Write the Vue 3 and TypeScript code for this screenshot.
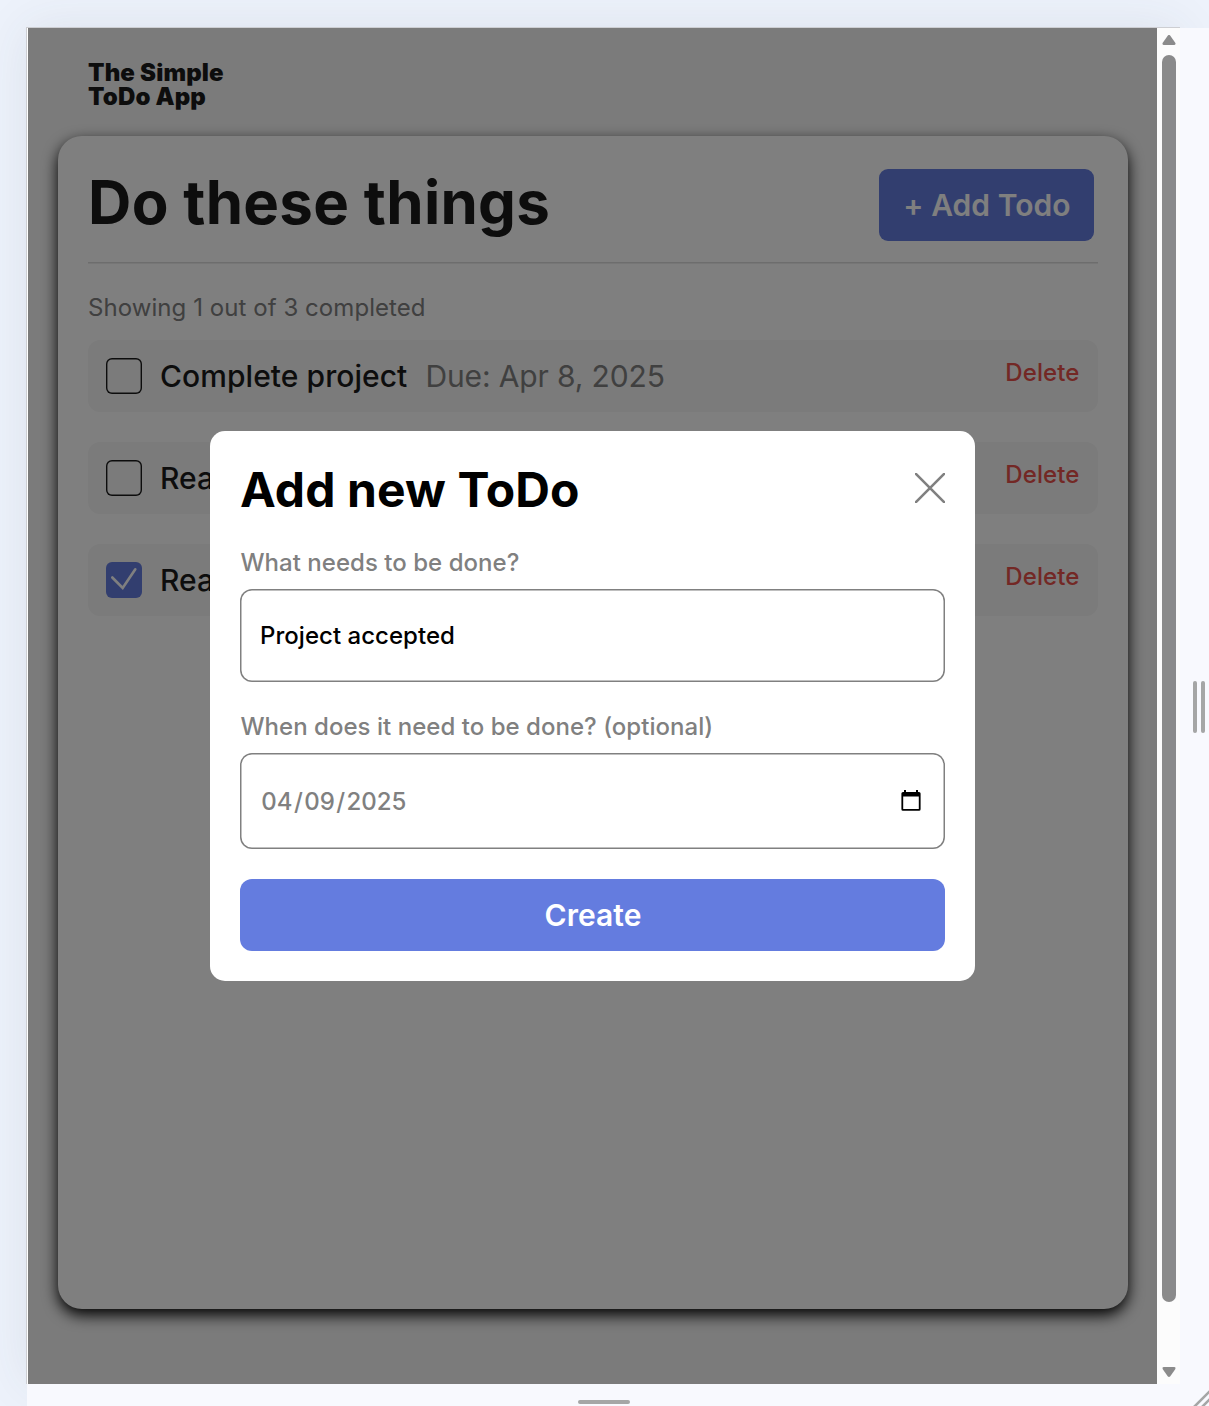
<script setup lang="ts">
import { computed, ref } from 'vue'

interface Todo {
  text: string
  due: string
  done: boolean
}

const todos = ref<Todo[]>([
  { text: 'Complete project', due: 'Apr 8, 2025', done: false },
  { text: 'Read', due: '', done: false },
  { text: 'Read', due: '', done: true },
])
const newTodo = ref('Project accepted')
const newDue = ref('04/09/2025')
const dueParts = computed(() => newDue.value.split(/(\/)/))
</script>

<template>
  <div class="desk">
    <div class="device">
      <div class="viewport">
        <div class="page">
          <header class="brand">The Simple<br />ToDo App</header>
          <main class="card">
            <div class="card-head">
              <h1>Do these things</h1>
              <button class="add" type="button">+ Add Todo</button>
            </div>
            <p class="summary">Showing 1 out of 3 completed</p>
            <ul class="list">
              <li v-for="(todo, i) in todos" :key="i" class="item">
                <span class="box" :class="{ checked: todo.done }">
                  <svg v-if="todo.done" viewBox="0 0 36 36" width="36" height="36">
                    <path d="M6.3 15.5 16.7 26 29.3 7.3" />
                  </svg>
                </span>
                <span class="text">{{ todo.text }}</span>
                <span v-if="todo.due" class="due">Due: {{ todo.due }}</span>
                <a class="delete">Delete</a>
              </li>
            </ul>
          </main>
        </div>
        <div class="overlay">
          <section class="modal">
            <div class="modal-head">
              <h2>Add new ToDo</h2>
              <svg class="close" viewBox="0 0 30 30" width="30" height="30">
                <path d="M0 0 30 30M30 0 0 30" />
              </svg>
            </div>
            <label>What needs to be done?</label>
            <div class="field name">{{ newTodo }}</div>
            <label class="second">When does it need to be done? (optional)</label>
            <div class="field date">
              <span class="digits"><span v-for="(part, i) in dueParts" :key="i">{{ part }}</span></span>
              <svg viewBox="0 0 20 22" width="20" height="22">
                <path
                  fill-rule="evenodd"
                  d="M3 0h2v2h10V0h2v2h1a1.6 1.6 0 0 1 1.6 1.6v15.6a1.6 1.6 0 0 1-1.6 1.6H2a1.6 1.6 0 0 1-1.6-1.6V3.6A1.6 1.6 0 0 1 2 2h1zM2.2 6.4v12.6h15.6V6.4z"
                />
              </svg>
            </div>
            <button class="create" type="button">Create</button>
          </section>
        </div>
      </div>
      <div class="scrollbar">
        <svg viewBox="0 0 14 11" width="14" height="11">
          <path d="M5.7 .7Q7 -.9 8.3 .7L13.4 7.9Q14 9.9 12.4 9.9H1.6Q0 9.9 .6 7.9z" />
        </svg>
        <div class="thumb"></div>
        <svg class="down" viewBox="0 0 14 11" width="14" height="11">
          <path d="M5.7 9.3Q7 10.9 8.3 9.3L13.4 2.1Q14 .1 12.4 .1H1.6Q0 .1 .6 2.1z" />
        </svg>
      </div>
    </div>
    <div class="rail right"><i></i><i></i></div>
    <div class="rail bottom">
      <i></i>
      <svg viewBox="0 0 16 16" width="16" height="16">
        <path d="M1 17 17 1M9 17l8-8" />
      </svg>
    </div>
  </div>
</template>

<style>
body {
  overflow: hidden;
}
</style>

<style scoped>
* {
  box-sizing: border-box;
}
.desk {
  width: 1209px;
  height: 1406px;
  padding: 27px 0 0 26px;
  display: grid;
  grid-template-columns: 1154px 29px;
  grid-template-rows: 1357px 22px;
  overflow: hidden;
  background: #edf2fb;
  font-family: Inter, 'Liberation Sans', sans-serif;
}
.device {
  display: flex;
  border-top: 1px solid #cdced2;
  border-left: 1px solid #cdced2;
  padding-left: 1px;
  background: #fff;
  box-shadow: 0 0 48px rgba(60, 64, 80, 0.09);
}
.viewport {
  position: relative;
  width: 1129px;
  height: 1356px;
  overflow: hidden;
}
.page {
  height: 100%;
  background: #f6f6f6;
  padding: 33px 29.5px 75px 30px;
  color: #1a1a1a;
}
.brand {
  height: 75px;
  padding-left: 30px;
  font-size: 24px;
  line-height: 24px;
  font-weight: 900;
  letter-spacing: 0.15px;
}
.card {
  height: 1173px;
  padding: 33px 29.5px 33px 30px;
  border-radius: 24px;
  background: #fff;
  box-shadow: 0 6px 15px #000;
}
.card-head {
  display: flex;
  justify-content: space-between;
  height: 94px;
  border-bottom: 1px solid #dadada;
  box-shadow: 0 1px #ececec;
}
h1,
h2,
p,
ul {
  margin: 0;
  padding: 0;
}
h1 {
  font-size: 60px;
  line-height: 66px;
  font-weight: 700;
  letter-spacing: 0.3px;
}
button {
  border: 0;
  font-family: inherit;
  font-size: 30px;
  font-weight: 600;
  letter-spacing: 0.05px;
  color: #fff;
  background: #647cdf;
  padding: 0 0 0 1px;
}
.add {
  width: 215px;
  height: 72px;
  margin-right: 4px;
  border-radius: 9px;
}
.summary {
  padding-top: 30px;
  height: 77px;
  font-size: 24px;
  line-height: 30px;
  letter-spacing: 0.06px;
  color: #808080;
}
.list {
  list-style: none;
  display: flex;
  flex-direction: column;
  gap: 30px;
}
.item {
  display: flex;
  align-items: center;
  height: 72px;
  padding: 0 18px;
  border-radius: 12px;
  background: #f6f6f6;
  font-size: 30px;
}
.box {
  width: 36px;
  height: 36px;
  margin-right: 18px;
  box-shadow: inset 0 0 0 1.4px #1a1a1a;
  border-radius: 6px;
}
.box.checked {
  box-shadow: none;
  background: #647cdf;
}
.box svg {
  display: block;
  fill: none;
  stroke: #fff;
  stroke-width: 2.6;
  stroke-linecap: round;
}
.text {
  font-weight: 500;
  letter-spacing: 0.06px;
}
.due {
  margin-left: 18px;
  color: #808080;
  letter-spacing: -0.13px;
}
.delete {
  margin: -8px 0.5px 0 auto;
  font-size: 24px;
  font-weight: 500;
  letter-spacing: 0.1px;
  color: #e7504b;
}
.overlay {
  position: absolute;
  inset: 0;
  display: flex;
  align-items: flex-start;
  justify-content: center;
  padding-top: 403px;
  background: rgba(0, 0, 0, 0.5);
}
.modal {
  width: 765px;
  height: 550px;
  padding: 30px;
  border-radius: 15px;
  background: #fff;
  color: #000;
}
.modal-head {
  display: flex;
  justify-content: space-between;
  height: 86px;
}
h2 {
  font-size: 48px;
  line-height: 58px;
  font-weight: 700;
  letter-spacing: 0.1px;
}
.close {
  margin-top: 12px;
  fill: none;
  stroke: #808080;
  stroke-width: 2.6;
}
label {
  display: block;
  height: 42px;
  padding: 1px 0 0 0.5px;
  font-size: 24px;
  line-height: 30px;
  font-weight: 500;
  letter-spacing: 0.03px;
  color: #808080;
}
.field {
  display: flex;
  align-items: center;
  box-shadow: inset 0 0 0 1.5px #808080;
  border-radius: 12px;
  padding: 0 24px 0 20px;
  font-size: 24px;
  font-weight: 500;
}
.name {
  height: 93px;
  letter-spacing: 0.03px;
}
.second {
  margin-top: 29px;
}
.date {
  height: 96px;
  justify-content: space-between;
  color: #808080;
}
.digits {
  display: flex;
  gap: 1.4px;
  padding-left: 1.3px;
}
.date svg {
  margin-right: 0.5px;
}
.create {
  display: block;
  width: 100%;
  height: 72px;
  margin-top: 30px;
  border-radius: 12px;
}
.scrollbar {
  width: 23px;
  padding: 7px 4px 6px 5px;
  display: flex;
  flex-direction: column;
  background: #fcfcfc;
  fill: #8b8b8b;
}
.thumb {
  width: 13.5px;
  height: 1246.5px;
  margin-top: 9px;
  border-radius: 7px;
  background: #8b8b8b;
}
.down {
  margin-top: auto;
}
.rail {
  display: flex;
  background: #f8f9fe;
  position: relative;
}
.rail i {
  border-radius: 2px;
  background: #a5a6a6;
}
.right {
  margin-top: 1px;
  padding: 2px 0 0 13px;
  gap: 4px;
  align-items: center;
}
.right i {
  width: 4px;
  height: 52px;
}
.bottom {
  grid-column: 1 / 3;
  margin-left: 1px;
  justify-content: space-between;
  align-items: flex-end;
}
.bottom i {
  width: 52px;
  height: 4px;
  margin: 0 0 2px 551px;
}
.bottom svg {
  fill: none;
  stroke: #a5a6a6;
  stroke-width: 2.6;
}
</style>
